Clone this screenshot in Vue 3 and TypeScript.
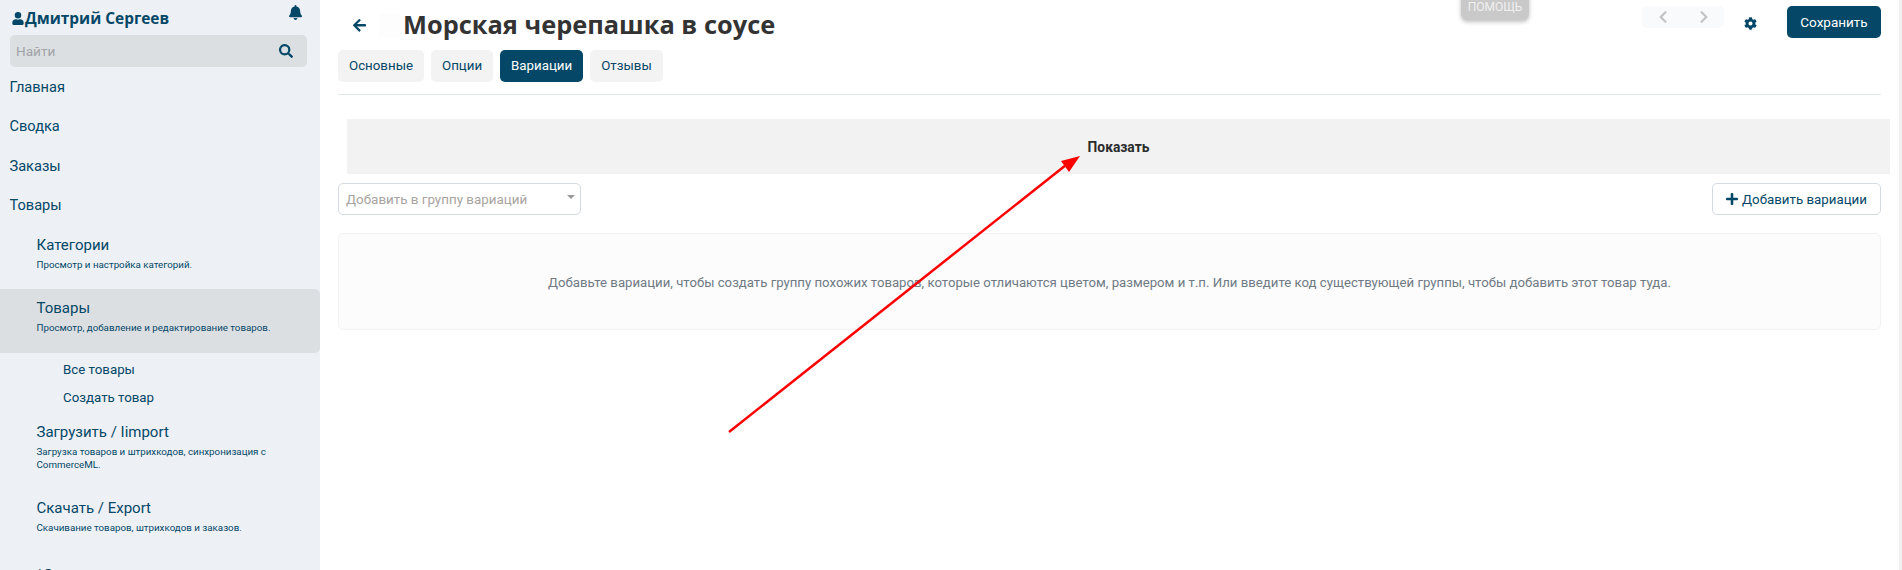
<script setup lang="ts">
interface Sub { title: string; desc: string; active?: boolean }
const topNav: string[] = ['Главная', 'Сводка', 'Заказы', 'Товары']
const cats: Sub = { title: 'Категории', desc: 'Просмотр и настройка категорий.' }
const goods: Sub = { title: 'Товары', desc: 'Просмотр, добавление и редактирование товаров.', active: true }
const links: string[] = ['Все товары', 'Создать товар']
const more: Sub[] = [
  { title: 'Загрузить / Iimport', desc: 'Загрузка товаров и штрихкодов, синхронизация с CommerceML.' },
  { title: 'Скачать / Export', desc: 'Скачивание товаров, штрихкодов и заказов.' }
]
const tabs: string[] = ['Основные', 'Опции', 'Вариации', 'Отзывы']
</script>

<template>
  <div class="page">
    <aside class="side">
      <div class="user">
        <span class="name">
          <svg class="user-ico" viewBox="0 0 448 512"><path d="M224 256a128 128 0 1 0 0-256 128 128 0 0 0 0 256zm90 32h-17a174 174 0 0 1-146 0h-17C60 288 0 348 0 422v42c0 26 22 48 48 48h352c26 0 48-22 48-48v-42c0-74-60-134-134-134z"/></svg>Дмитрий Сергеев
        </span>
        <svg class="bell" viewBox="0 0 448 512"><path d="M224 512c35 0 64-29 64-64H160c0 35 29 64 64 64zm215-150c-19-21-55-52-55-154 0-78-54-140-128-155V32a32 32 0 1 0-64 0v21C118 68 64 130 64 208c0 102-36 133-55 154-6 6-9 14-9 22 0 16 13 32 32 32h384c19 0 32-16 32-32 0-8-3-16-9-22z"/></svg>
      </div>
      <div class="search">
        <span class="placeholder">Найти</span>
        <svg class="search-ico" viewBox="0 0 512 512"><path d="M505 443 405 343c-4-4-11-7-17-7h-16a208 208 0 1 0-36 36v16c0 6 3 13 7 17l100 100c9 9 24 9 34 0l28-28c9-10 9-25 0-34zM208 336a128 128 0 1 1 0-256 128 128 0 0 1 0 256z"/></svg>
      </div>
      <nav class="top-nav">
        <a v-for="n in topNav" :key="n" class="top-link">{{ n }}</a>
      </nav>
      <div class="sub first">
        <div class="sub-title">{{ cats.title }}</div>
        <div class="sub-desc">{{ cats.desc }}</div>
      </div>
      <div class="sub active">
        <div class="sub-title">{{ goods.title }}</div>
        <div class="sub-desc">{{ goods.desc }}</div>
      </div>
      <div class="links">
        <a v-for="l in links" :key="l" class="link">{{ l }}</a>
      </div>
      <div v-for="m in more" :key="m.title" class="sub more">
        <div class="sub-title">{{ m.title }}</div>
        <div class="sub-desc">{{ m.desc }}</div>
      </div>
      <div class="sub last"><div class="sub-title">*Отзывы</div></div>
    </aside>

    <main class="main">
      <header class="head">
        <svg class="back" viewBox="0 0 448 512"><path d="m257 472-22 22a24 24 0 0 1-34 0L7 300a24 24 0 0 1 0-34L201 72a24 24 0 0 1 34 0l22 22c10 10 10 25 0 35L137 243h287c13 0 24 11 24 24v32c0 13-11 24-24 24H137l120 114c10 10 10 25 0 35z"/></svg>
        <div class="ghost"></div>
        <h1 class="title">Морская черепашка в соусе</h1>
        <div class="help">ПОМОЩЬ</div>
        <div class="pager">
          <span class="pg"><svg viewBox="0 0 320 512"><path d="m35 239 194-194a24 24 0 0 1 34 0l23 23c9 9 9 24 0 34L132 256l154 154c9 10 9 25 0 34l-23 23a24 24 0 0 1-34 0L35 273a24 24 0 0 1 0-34z"/></svg></span>
          <span class="pg"><svg viewBox="0 0 320 512"><path d="M285 273 91 467a24 24 0 0 1-34 0l-23-23a24 24 0 0 1 0-34l154-154L34 102a24 24 0 0 1 0-34l23-23a24 24 0 0 1 34 0l194 194c10 10 10 25 0 34z"/></svg></span>
        </div>
        <svg class="gear" viewBox="0 0 512 512"><path d="m487 316-42-25a191 191 0 0 0 0-70l42-25c5-3 7-9 5-14-11-35-30-67-54-93-4-4-10-5-15-2l-42 24c-18-15-38-27-60-35V28c0-6-4-11-9-12-37-8-74-8-110 0-5 1-9 6-9 12v48c-22 8-42 20-60 35L91 87c-5-3-11-2-15 2-24 26-43 58-54 93-2 5 0 11 5 14l42 25a191 191 0 0 0 0 70l-42 25c-5 3-7 9-5 14 11 35 30 67 54 93 4 4 10 5 15 2l42-24c18 15 38 27 60 35v48c0 6 4 11 9 12 37 8 74 8 110 0 5-1 9-6 9-12v-48c22-8 42-20 60-35l42 24c5 3 11 2 15-2 24-26 43-58 54-93 2-5 0-11-5-14zM256 336a80 80 0 1 1 0-160 80 80 0 0 1 0 160z"/></svg>
        <button class="save">Сохранить</button>
      </header>

      <div class="tabs">
        <a v-for="t in tabs" :key="t" class="tab" :class="{ on: t === 'Вариации' }">{{ t }}</a>
      </div>
      <div class="rule"></div>

      <div class="notice">Показать</div>

      <div class="controls">
        <div class="select">
          <span>Добавить в группу вариаций</span>
          <i class="caret"></i>
        </div>
        <button class="add">
          <svg viewBox="0 0 448 512"><path d="M416 208H272V64c0-18-14-32-32-32h-32c-18 0-32 14-32 32v144H32c-18 0-32 14-32 32v32c0 18 14 32 32 32h144v144c0 18 14 32 32 32h32c18 0 32-14 32-32V304h144c18 0 32-14 32-32v-32c0-18-14-32-32-32z"/></svg>
          Добавить вариации
        </button>
      </div>

      <div class="empty">Добавьте вариации, чтобы создать группу похожих товаров, которые отличаются цветом, размером и т.п. Или введите код существующей группы, чтобы добавить этот товар туда.</div>
    </main>

    <div class="scrollbar"></div>

    <svg class="arrow" viewBox="0 0 1902 570" aria-hidden="true">
      <line x1="729" y1="432" x2="1066" y2="165" stroke="#ff0000" stroke-width="2.5" />
      <polygon points="1080,156 1061,161 1069,172" fill="#ff0000" />
    </svg>
  </div>
</template>

<style>
html, body { margin: 0; padding: 0; background: #fff; }
</style>

<style scoped>
.page {
  display: flex;
  width: 1902px;
  height: 570px;
  overflow: hidden;
  position: relative;
  font-family: Roboto, "Noto Sans", sans-serif;
  color: #333;
  background: #fff;
}
.side {
  width: 320px;
  flex: none;
  height: 570px;
  overflow: hidden;
  background: #edf1f5;
  color: #044767;
  box-sizing: border-box;
}
.user {
  display: flex;
  justify-content: space-between;
  height: 35px;
  padding: 5px 18px 0 12px;
  box-sizing: border-box;
}
.name {
  display: flex;
  align-items: center;
  height: 26px;
  font-family: "Open Sans", sans-serif;
  font-size: 15.4px;
  font-weight: 700;
  color: #044767;
}
.user-ico { width: 12px; height: 13px; fill: #044767; margin-right: 1px; }
.bell { width: 13px; height: 15px; fill: #044767; margin-top: 0; }
.search {
  display: flex;
  justify-content: space-between;
  align-items: center;
  margin: 0 13px 0 10px;
  height: 32px;
  padding: 0 14px 0 6px;
  background: #dcdfe2;
  border-radius: 5px;
  font-size: 13.6px;
  color: #a0a4a8;
  box-sizing: border-box;
}
.placeholder { line-height: 34px; }
.search-ico { width: 14px; height: 14px; fill: #044767; }
.top-nav { display: flex; flex-direction: column; padding-top: 7px; }
.top-link {
  height: 39.3px;
  line-height: 26px;
  padding-left: 9.5px;
  font-size: 14.6px;
  color: #044767;
}
.sub { padding: 0 0 0 36.5px; }
.sub.first { margin-top: -2px; height: 53px; padding-top: 6px; box-sizing: border-box; }
.sub.active {
  margin-top: 7px;
  height: 64px;
  padding-top: 9px;
  box-sizing: border-box;
  background: #dcdfe2;
  border-radius: 0 5px 5px 0;
}
.sub.more { height: 76px; box-sizing: border-box; padding-right: 40px; }
.sub-title { font-size: 15px; line-height: 20px; color: #044767; }
.sub-desc { font-size: 9.75px; line-height: 13px; margin-top: 3px; color: #044767; }
.links { display: flex; flex-direction: column; padding: 3px 0 0 63px; height: 69px; box-sizing: border-box; }
.link { font-size: 13.3px; line-height: 27.5px; color: #044767; }
.sub.last { margin-top: -9px; }

.main {
  flex: 1;
  min-width: 0;
  padding: 0 0 0 18px;
  box-sizing: border-box;
  width: 1562px;
}
.head {
  position: relative;
  display: flex;
  align-items: center;
  height: 50px;
  box-sizing: border-box;
  padding-right: 21px;
}
.back { width: 13px; height: 15px; fill: #044767; margin: 0 0 0 15px; position: relative; top: -1px; }
.ghost { width: 23px; height: 23px; margin-left: 12px; border-radius: 3px; background: #fdfdfd; }
.title {
  margin: 0 0 0 2px;
  font-family: "Open Sans", sans-serif;
  font-size: 25.4px;
  font-weight: 700;
  line-height: 50px;
  color: #333;
  position: relative;
  top: -1px;
}
.help {
  position: absolute;
  left: 1123px;
  top: -10px;
  width: 68px;
  height: 30px;
  box-sizing: border-box;
  padding-top: 10px;
  background: #c9c9c9;
  border-radius: 6px;
  text-align: center;
  font-size: 12px;
  line-height: 14px;
  color: #f0f0f0;
  box-shadow: 0 2px 4px rgba(0, 0, 0, .25);
}
.pager {
  margin-left: auto;
  display: flex;
  height: 22px;
  background: #f9fafc;
  border-radius: 5px;
  position: relative;
  top: -8px;
}
.pg { width: 41px; display: flex; align-items: center; justify-content: center; }
.pg svg { width: 10px; height: 14px; fill: #c4c4c4; }
.gear { width: 13px; height: 13px; fill: #044767; margin: 0 30px 0 20px; position: relative; top: -2px; }
.save {
  width: 94px;
  height: 32px;
  background: #044767;
  border: none;
  border-radius: 5px;
  color: #fff;
  font: 13.5px Roboto, "Noto Sans", sans-serif;
  padding: 0;
  position: relative;
  top: -3px;
}
.tabs { display: flex; gap: 7px; }
.tab {
  height: 32px;
  padding: 0 11px;
  line-height: 32px;
  font-size: 13.3px;
  background: #f3f3f3;
  color: #044767;
  border-radius: 5px;
}
.tab.on { background: #044767; color: #fff; }
.rule { height: 1px; margin: 12px 21px 0 0; background: #e2e8ee; }
.notice {
  margin: 24px 12px 0 9px;
  height: 55px;
  background: #f2f2f2;
  text-align: center;
  font-size: 13.8px;
  font-weight: 700;
  line-height: 57px;
  color: #2b2b2b;
}
.controls {
  display: flex;
  justify-content: space-between;
  margin: 9px 21px 0 0;
}
.select {
  position: relative;
  width: 243px;
  height: 32px;
  box-sizing: border-box;
  border: 1px solid #d4dae2;
  border-radius: 5px;
  padding-left: 7px;
  font-size: 13.4px;
  line-height: 32px;
  color: #a8a4a0;
}
.caret {
  position: absolute;
  right: 5px;
  top: 11px;
  border-left: 4px solid transparent;
  border-right: 4px solid transparent;
  border-top: 4px solid #999;
}
.add {
  display: flex;
  align-items: center;
  justify-content: center;
  gap: 4px;
  width: 169px;
  height: 32px;
  box-sizing: border-box;
  background: #fff;
  border: 1px solid #d4dae2;
  border-radius: 5px;
  font: 13.3px Roboto, "Noto Sans", sans-serif;
  color: #044767;
  padding: 0;
}
.add svg { width: 12px; height: 14px; fill: #044767; }
.empty {
  margin: 18px 21px 0 0;
  height: 97px;
  box-sizing: border-box;
  background: #fcfcfc;
  border: 1px solid #f2f2f2;
  border-radius: 5px;
  text-align: center;
  line-height: 98px;
  font-size: 13.2px;
  color: #6f7a85;
}
.scrollbar {
  position: absolute;
  right: 0;
  top: 0;
  width: 3px;
  height: 570px;
  background: #f1f1f1;
}
.arrow {
  position: absolute;
  left: 0;
  top: 0;
  width: 1902px;
  height: 570px;
  pointer-events: none;
}
</style>
